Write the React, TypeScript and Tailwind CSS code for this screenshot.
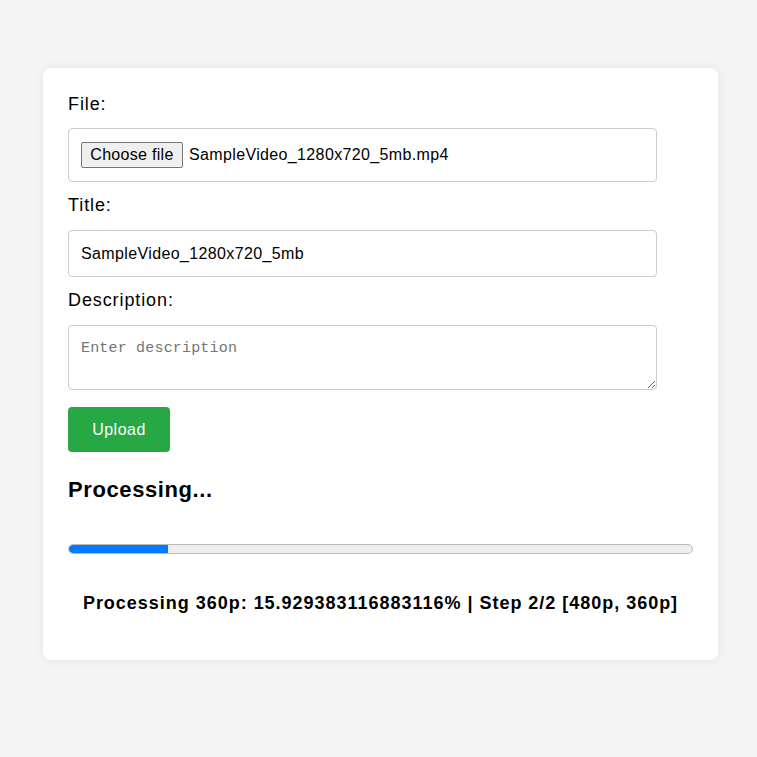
import React from "react";

const percent = 15.929383116883116;

export default function App() {
  return (
    <div className="min-h-[757px] bg-[#f4f4f4] pt-[68px] font-['Liberation_Sans',Arial,sans-serif] text-black">
      <div className="ml-[43px] w-[675px] rounded-lg bg-white px-[25px] pt-[25px] pb-[46px] shadow-[0_0_10px_rgba(0,0,0,0.08)]">
        <label className="block text-[18px] leading-[22px] tracking-[0.9px]">File:</label>
        <div className="mt-[13px] flex h-[54px] w-[589px] items-center rounded border border-[#ccc] px-[12px]">
          <button className="h-[26px] w-[102px] rounded-[2px] border border-[#767676] bg-[#efefef] text-[16px] leading-none tracking-[0.3px] text-black">
            Choose file
          </button>
          <span className="ml-[6px] text-[16px] tracking-[0.36px]">SampleVideo_1280x720_5mb.mp4</span>
        </div>

        <label className="mt-[12px] block text-[18px] leading-[22px] tracking-[0.9px]">Title:</label>
        <input
          type="text"
          defaultValue="SampleVideo_1280x720_5mb"
          className="mt-[14px] block h-[47px] w-[589px] rounded border border-[#ccc] px-[12px] text-[16px] tracking-[0.37px] outline-none"
        />

        <label className="mt-[12px] block text-[18px] leading-[22px] tracking-[0.9px]">Description:</label>
        <textarea
          placeholder="Enter description"
          className="mt-[14px] block h-[65px] w-[589px] rounded border border-[#ccc] px-[12px] pt-[13px] pb-[9px] font-['Liberation_Mono',monospace] text-[15px] leading-[20px] tracking-[0.18px] outline-none placeholder:text-[#757575]"
        />

        <button className="mt-[17px] h-[45px] w-[102px] rounded bg-[#28a745] text-[16px] tracking-[0.5px] text-white">
          Upload
        </button>

        <h3 className="mt-[25px] text-[22px] font-bold leading-[26px] tracking-[0.6px]">Processing...</h3>

        <div className="mt-[41px] h-[10px] w-full overflow-hidden rounded-full border border-[#bbb] bg-[#eee]">
          <div className="h-full rounded-l-full bg-[#007bff]" style={{ width: `${percent}%` }} />
        </div>

        <p className="mt-[38px] text-center text-[18px] font-bold leading-[22px] tracking-[0.98px]">
          Processing 360p: {percent}% | Step 2/2 [480p, 360p]
        </p>
      </div>
    </div>
  );
}
